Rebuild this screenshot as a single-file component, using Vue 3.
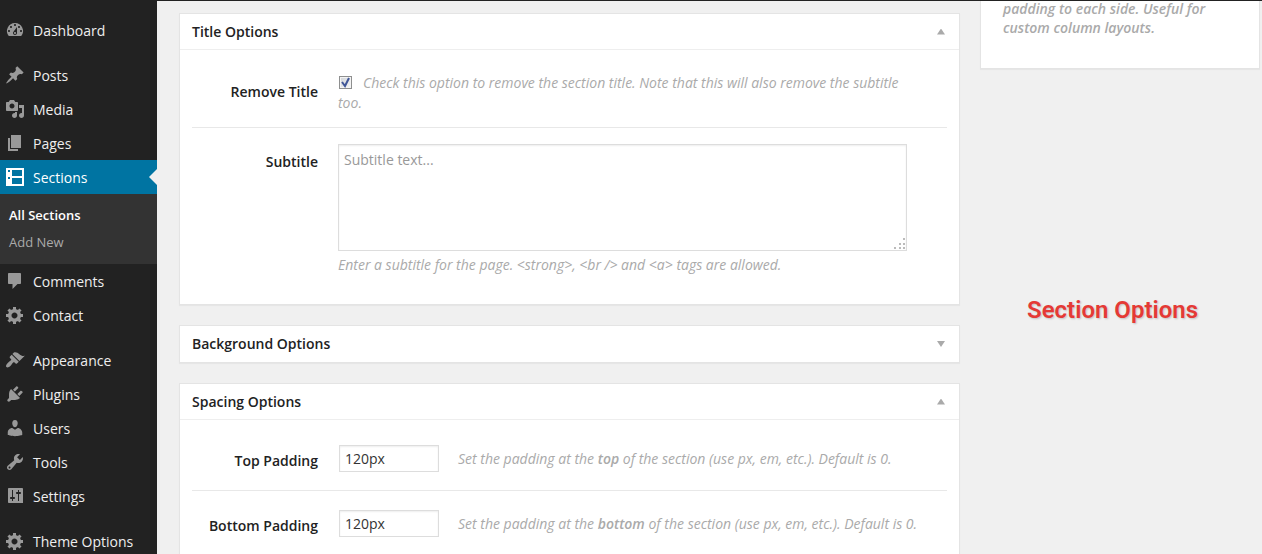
<script setup>
import { ref } from 'vue'

const gear = 'M18 12h-2.18c-.17.7-.44 1.35-.81 1.93l1.54 1.54-2.1 2.1-1.54-1.54c-.58.36-1.23.63-1.91.79V19H8v-2.18c-.68-.16-1.33-.43-1.91-.79l-1.54 1.54-2.12-2.12 1.54-1.54c-.36-.58-.63-1.23-.79-1.91H1V9.03h2.17c.16-.7.44-1.35.8-1.94L2.43 5.55l2.1-2.1 1.54 1.54c.58-.37 1.24-.64 1.93-.81V2h3v2.18c.68.16 1.33.43 1.91.79l1.54-1.54 2.12 2.12-1.54 1.54c.36.59.64 1.24.8 1.94H18V12zm-8.5 1.5c1.66 0 3-1.34 3-3s-1.34-3-3-3-3 1.34-3 3 1.34 3 3 3z'

const groups = [
  [
    { label: 'Dashboard', icon: 'M3.76 16h12.48A7.998 7.998 0 0 0 10 3a7.998 7.998 0 0 0-6.24 13zM10 4c.55 0 1 .45 1 1s-.45 1-1 1-1-.45-1-1 .45-1 1-1zM6 6c.55 0 1 .45 1 1s-.45 1-1 1-1-.45-1-1 .45-1 1-1zm8 0c.55 0 1 .45 1 1s-.45 1-1 1-1-.45-1-1 .45-1 1-1zm-5.37 5.55L12 7v6c0 1.1-.9 2-2 2s-2-.9-2-2c0-.57.24-1.08.63-1.45zM4 10c.55 0 1 .45 1 1s-.45 1-1 1-1-.45-1-1 .45-1 1-1zm12 0c.55 0 1 .45 1 1s-.45 1-1 1-1-.45-1-1 .45-1 1-1zm-5 3c0-.55-.45-1-1-1s-1 .45-1 1 .45 1 1 1 1-.45 1-1z' },
  ],
  [
    { label: 'Posts', icon: 'M10.44 3.02l1.82-1.82 6.36 6.35-1.83 1.82c-1.05-.68-2.48-.57-3.41.36l-.75.75c-.92.93-1.04 2.35-.35 3.41l-1.83 1.82-2.41-2.41-2.8 2.79c-.42.42-3.38 2.71-3.8 2.29s1.86-3.39 2.28-3.81l2.79-2.79L4.1 9.36l1.83-1.82c1.05.69 2.48.57 3.4-.36l.75-.75c.93-.92 1.05-2.35.36-3.41z' },
    { label: 'Media', icon: 'M13 11V4c0-.55-.45-1-1-1h-1.67L9 1H5L3.67 3H2c-.55 0-1 .45-1 1v7c0 .55.45 1 1 1h10c.55 0 1-.45 1-1zM7 4.5c1.38 0 2.5 1.12 2.5 2.5S8.38 9.5 7 9.5 4.5 8.38 4.5 7 5.62 4.5 7 4.5zM14 6h5v10.5c0 1.38-1.12 2.5-2.5 2.5S14 17.88 14 16.5s1.12-2.5 2.5-2.5c.17 0 .34.02.5.05V9h-3V6zm-4 8.05V13h2v3.5c0 1.38-1.12 2.5-2.5 2.5S7 17.88 7 16.5 8.12 14 9.5 14c.17 0 .34.02.5.05z' },
    { label: 'Pages', icon: 'M6 15V2h10v13H6zm-1 1h8v2H3V5h2v11z' },
    { label: 'Sections', current: true, icon: 'M1 1h18v18H1zM3 3v2h2V3zM3 10v2h2v-2zM7 3v6h10V3zM7 11v6h10v-6z', children: ['All Sections', 'Add New'] },
    { label: 'Comments', icon: 'M4 2h11c.55 0 1 .45 1 1v9c0 .55-.45 1-1 1h-2.5L7.5 18v-5H4c-.55 0-1-.45-1-1V3c0-.55.45-1 1-1z' },
    { label: 'Contact', icon: gear },
  ],
  [
    { label: 'Appearance', icon: 'M14.48 11.06L7.41 3.99l1.5-1.5c.5-.56 2.3-.47 3.51.32 1.21.8 1.43 1.28 2.91 2.1 1.18.64 2.45 1.26 4.45.85zm-.71.71L6.7 4.7 4.93 6.47c-.39.39-.39 1.02 0 1.41l1.06 1.06c.39.39.39 1.03 0 1.42-.6.6-1.43 1.11-2.21 1.69-.35.26-.7.53-1.01.84C1.43 14.23.4 16.08 1.4 17.07c.99 1 2.84-.03 4.18-1.36.31-.31.58-.66.85-1.02.57-.78 1.08-1.61 1.69-2.21.39-.39 1.02-.39 1.41 0l1.06 1.06c.39.39 1.02.39 1.41 0z' },
    { label: 'Plugins', icon: 'M13.11 4.36L9.87 7.6 8 5.73l3.24-3.24c.35-.34 1.05-.2 1.56.32.52.51.66 1.21.31 1.55zm-8 1.77l.91-1.12 9.01 9.01-1.19.84c-.71.71-2.63 1.16-3.82 1.16H6.14L4.9 17.26c-.59.59-1.54.59-2.12 0-.59-.58-.59-1.53 0-2.12l1.24-1.24v-3.88c0-1.13.4-3.19 1.09-3.89zm7.26 3.97l3.24-3.24c.34-.35 1.04-.21 1.55.31.52.51.66 1.21.31 1.55l-3.24 3.25z' },
    { label: 'Users', icon: 'M10 9.25c-2.27 0-2.73-3.44-2.73-3.44C7 4.02 7.82 2 9.97 2c2.16 0 2.98 2.02 2.71 3.81 0 0-.41 3.44-2.68 3.44zm0 2.57L12.72 10c2.39 0 4.52 2.33 4.52 4.53v2.49s-3.65 1.13-7.24 1.13c-3.65 0-7.24-1.13-7.24-1.13v-2.49c0-2.25 1.94-4.48 4.47-4.48z' },
    { label: 'Tools', icon: 'M16.68 9.77c-1.34 1.34-3.3 1.67-4.95.99l-5.41 6.52c-.99.99-2.59.99-3.58 0s-.99-2.59 0-3.57l6.52-5.42c-.68-1.65-.35-3.61.99-4.95 1.28-1.28 3.12-1.62 4.72-1.06l-2.89 2.89 2.82 2.82 2.86-2.87c.53 1.58.18 3.39-1.08 4.65zM3.81 16.21c.4.39 1.04.39 1.43 0 .4-.4.4-1.04 0-1.43-.39-.4-1.03-.4-1.43 0-.39.39-.39 1.03 0 1.43z' },
    { label: 'Settings', icon: 'M18 17V3c0-.55-.45-1-1-1H4c-.55 0-1 .45-1 1v13c0 .55.45 1 1 1h14zM8 11h1c.55 0 1 .45 1 1s-.45 1-1 1H8v2H7v-2H6c-.55 0-1-.45-1-1s.45-1 1-1h1V4h1v7zm5-3h-1c-.55 0-1-.45-1-1s.45-1 1-1h1V4h1v2h1c.55 0 1 .45 1 1s-.45 1-1 1h-1v7h-1V8z' },
  ],
  [{ label: 'Theme Options', icon: gear }],
]

const removeTitle = ref(true)
const subtitle = ref('')
const paddings = ref([
  { id: 'top-padding', label: 'Top Padding', side: 'top', value: '120px' },
  { id: 'bottom-padding', label: 'Bottom Padding', side: 'bottom', value: '120px' },
])
</script>

<template>
  <div class="admin">
    <nav class="menu" aria-label="Main menu">
      <ul v-for="(group, g) in groups" :key="g" class="group">
        <li v-for="item in group" :key="item.label">
          <a href="#" class="item" :class="{ current: item.current }">
            <svg class="icon" viewBox="0 0 20 20" aria-hidden="true"><path fill-rule="evenodd" :d="item.icon" /></svg>
            <span class="label">{{ item.label }}</span>
          </a>
          <ul v-if="item.children" class="submenu">
            <li v-for="(child, i) in item.children" :key="child">
              <a href="#" class="subitem" :class="{ active: i === 0 }">{{ child }}</a>
            </li>
          </ul>
        </li>
      </ul>
    </nav>

    <main class="content">
      <div class="boxes">
        <section class="box">
          <header class="head">
            <h3>Title Options</h3>
            <button type="button" class="toggle open" aria-label="Toggle Title Options"></button>
          </header>
          <div class="body title-body">
            <div class="row">
              <label class="name" for="remove-title">Remove Title</label>
              <div class="field">
                <span class="check">
                  <input id="remove-title" v-model="removeTitle" type="checkbox" />
                  <svg v-if="removeTitle" viewBox="0 0 13 13" aria-hidden="true"><path d="M3 6l3 4 4-8" /></svg>
                </span>
                <span class="hint">Check this option to remove the section title. Note that this will also remove the subtitle too.</span>
              </div>
            </div>
            <div class="row">
              <label class="name" for="subtitle">Subtitle</label>
              <div class="field">
                <div class="area">
                  <textarea id="subtitle" v-model="subtitle" placeholder="Subtitle text..."></textarea>
                  <svg class="grip" viewBox="0 0 12 12" aria-hidden="true">
                    <path d="M9 0h2v2H9zM5 5h2v2H5zM9 5h2v2H9zM0 9h2v2H0zM5 9h2v2H5zM9 9h2v2H9z" />
                  </svg>
                </div>
                <p class="hint">Enter a subtitle for the page. &lt;strong&gt;, &lt;br /&gt; and &lt;a&gt; tags are allowed.</p>
              </div>
            </div>
          </div>
        </section>

        <section class="box">
          <header class="head closed">
            <h3>Background Options</h3>
            <button type="button" class="toggle" aria-label="Toggle Background Options"></button>
          </header>
        </section>

        <section class="box">
          <header class="head">
            <h3>Spacing Options</h3>
            <button type="button" class="toggle open" aria-label="Toggle Spacing Options"></button>
          </header>
          <div class="body spacing-body">
            <div v-for="p in paddings" :key="p.id" class="row">
              <label class="name" :for="p.id">{{ p.label }}</label>
              <div class="field inline">
                <input :id="p.id" v-model="p.value" type="text" class="text" />
                <span class="hint">Set the padding at the <strong>{{ p.side }}</strong> of the section (use px, em, etc.). Default is 0.</span>
              </div>
            </div>
          </div>
        </section>
      </div>

      <aside class="side">
        <div class="box note">
          <p>padding to each side. Useful for custom column layouts.</p>
        </div>
        <h2 class="caption">Section Options</h2>
      </aside>
    </main>
  </div>
</template>

<style>
body {
  margin: 0;
  background: #f0f0f0;
}
</style>

<style scoped>
* {
  box-sizing: border-box;
}

.admin {
  display: flex;
  height: 100vh;
  overflow: hidden;
  border-top: 1px solid #222;
  background: #f0f0f0;
  color: #222;
  font: 14px/20px "Open Sans", sans-serif;
}

ul,
h2,
h3,
p {
  margin: 0;
  padding: 0;
  list-style: none;
}

a {
  text-decoration: none;
}

.menu {
  flex: none;
  display: flex;
  flex-direction: column;
  gap: 11px;
  width: 157px;
  padding-top: 12px;
  background: #222;
}

.item {
  position: relative;
  display: flex;
  align-items: center;
  gap: 8px;
  height: 34px;
  padding-left: 5px;
  color: #eee;
}

.label {
  padding-top: 2px;
}

.icon {
  width: 20px;
  height: 20px;
  fill: #999;
}

.item.current {
  background: #0074a2;
  color: #fff;
}

.item.current .icon {
  fill: #fff;
}

.item.current::after {
  content: "";
  position: absolute;
  right: 0;
  top: 9px;
  border: 8px solid transparent;
  border-left: 0;
  border-right-color: #f0f0f0;
}

.submenu {
  padding: 8px 0;
  background: #333;
}

.subitem {
  display: block;
  padding: 0 9px;
  color: #aaa;
  font-size: 13px;
  line-height: 27px;
}

.subitem.active {
  color: #fff;
  font-weight: 600;
}

.content {
  flex: 1;
  display: flex;
  align-items: flex-start;
  gap: 20px;
  min-width: 0;
  padding: 0 2px 0 22px;
}

.boxes {
  flex: 1;
  display: flex;
  flex-direction: column;
  gap: 20px;
  min-width: 0;
  padding-top: 12px;
}

.box {
  border: 1px solid #e4e4e4;
  background: #fff;
  box-shadow: 0 1px 1px rgba(0, 0, 0, 0.04);
}

.head {
  display: flex;
  align-items: center;
  justify-content: space-between;
  height: 36px;
  padding: 0 12px;
  border-bottom: 1px solid #eee;
}

.head.closed {
  border-bottom: 0;
}

h3 {
  font-size: 14px;
  font-weight: 600;
}

.toggle {
  width: 12px;
  height: 20px;
  padding: 0;
  border: 0;
  background: none;
}

.toggle::before {
  content: "";
  display: block;
  margin: auto;
  width: 8px;
  height: 6px;
  background: #aaa;
  clip-path: polygon(0 0, 100% 0, 50% 100%);
}

.toggle.open::before {
  clip-path: polygon(50% 0, 100% 100%, 0 100%);
}

.body {
  padding: 0 12px;
}

.title-body {
  padding-top: 7px;
  padding-bottom: 15px;
}

.spacing-body {
  padding-top: 6px;
  padding-bottom: 15px;
}

.row {
  display: flex;
  gap: 20px;
  padding: 16px 0 14px;
}

.row + .row {
  border-top: 1px solid #e8e8e8;
}

.spacing-body .row {
  padding-bottom: 17px;
}

.name {
  flex: none;
  width: 126px;
  padding-top: 9px;
  font-weight: 600;
  text-align: right;
}

.title-body .row + .row .name {
  padding-top: 8px;
}

.field {
  flex: 1;
  min-width: 0;
  padding-right: 27px;
}

.hint {
  color: #aaa;
  font-style: italic;
}

.hint strong {
  font-weight: 600;
}

.check {
  position: relative;
  display: inline-block;
  width: 13px;
  height: 13px;
  margin: 0 11px 0 1px;
  vertical-align: -1px;
}

.check input {
  appearance: none;
  display: block;
  width: 13px;
  height: 13px;
  margin: 0;
  border: 1px solid #8e8f8f;
  background: linear-gradient(135deg, #cfd3d8, #f6f6f6);
  box-shadow: inset 0 0 0 1px #f4f4f4;
}

.check svg {
  position: absolute;
  inset: 0;
  fill: none;
  stroke: #3f5597;
  stroke-width: 2;
  pointer-events: none;
}

.area {
  position: relative;
  margin-right: 13px;
}

textarea {
  display: block;
  width: 100%;
  height: 107px;
  padding: 5px;
  border: 1px solid #ddd;
  box-shadow: inset 0 1px 2px rgba(0, 0, 0, 0.07);
  color: #333;
  font: inherit;
  resize: none;
}

textarea::placeholder {
  color: #999;
}

.grip {
  position: absolute;
  right: 1px;
  bottom: 1px;
  width: 12px;
  height: 12px;
  fill: #bbb;
}

p.hint {
  padding-top: 4px;
}

.inline {
  display: flex;
  align-items: flex-start;
  gap: 19px;
  padding: 3px 0 1px 1px;
}

.text {
  width: 100px;
  height: 27px;
  padding: 3px 5px;
  border: 1px solid #ddd;
  box-shadow: inset 0 1px 2px rgba(0, 0, 0, 0.07);
  color: #333;
  font: inherit;
}

.inline .hint {
  padding-top: 4px;
}

.side {
  flex: none;
  width: 280px;
}

.note {
  display: flex;
  align-items: flex-end;
  height: 68px;
  padding: 0 22px 31px;
  border-top: 0;
  color: #aaa;
  font-weight: 600;
  font-style: italic;
  line-height: 19px;
}

.caption {
  padding: 226px 0 0 47px;
  color: #e53935;
  font: 600 24px/30px Roboto, sans-serif;
  text-shadow: 1px 1px 2px rgba(0, 0, 0, 0.2);
}
</style>
